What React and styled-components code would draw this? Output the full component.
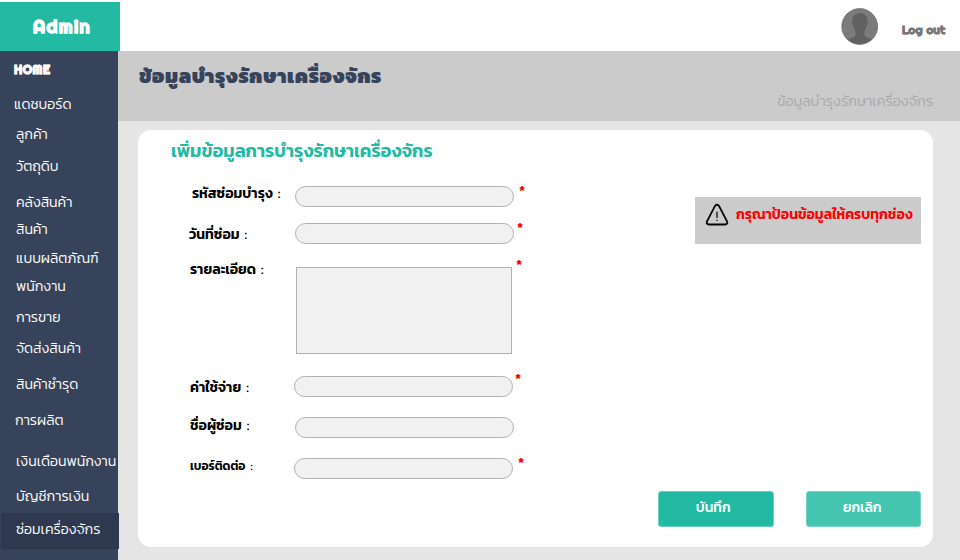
import React from "react";
import styled, { createGlobalStyle } from "styled-components";

const GlobalStyle = createGlobalStyle`
  *, *::before, *::after { box-sizing: border-box; }
  body { margin: 0; background: #fff; font-family: "Kanit", "Noto Sans Thai", "Noto Sans", sans-serif; }
  button { font: inherit; border: 0; padding: 0; }
`;

const display = `"Righteous", "Kanit", sans-serif`;

const Page = styled.div`
  width: 960px;
  height: 560px;
  display: grid;
  grid-template-columns: 118px 842px;
  grid-template-rows: 51px 509px;
  overflow: hidden;
  background: #fff;
`;

const Header = styled.header`
  grid-column: 1 / -1;
  display: flex;
  justify-content: space-between;
  padding-top: 2px;
`;

const Brand = styled.div`
  width: 120px;
  height: 49px;
  padding: 13px 0 0 33px;
  background: #22baa3;
  color: #fff;
  font: 700 18px/24px ${display};
  letter-spacing: 1.4px;
  -webkit-text-stroke: 0.6px;
  white-space: nowrap;
`;

const Account = styled.div`
  display: flex;
  padding: 6px 0 0;
  width: 119px;
`;

const LogOut = styled.a`
  margin: 13px 0 0 23px;
  color: #77777b;
  font: 700 11.5px/18px ${display};
  letter-spacing: 0.3px;
  -webkit-text-stroke: 0.5px;
  white-space: nowrap;
`;

const Sidebar = styled.nav`
  display: flex;
  flex-direction: column;
  background: #37435a;
  color: #fff;
  z-index: 1;
`;

const Home = styled.a`
  height: 43px;
  padding: 10px 0 0 14px;
  font: 700 12px/18px ${display};
  letter-spacing: 0.5px;
  -webkit-text-stroke: 0.7px;
`;

const NavItem = styled.a`
  flex: none;
  height: ${(p) => p.$height}px;
  padding-left: ${(p) => p.$inset || 16}px;
  font-size: 14.2px;
  font-weight: 300;
  line-height: 20px;
  white-space: nowrap;
`;

const ActiveItem = styled(NavItem)`
  width: 118px;
  margin: 0 0 0 1px;
  padding: 6px 0 0 15px;
  background: #2e3950;
`;

const Main = styled.main`
  display: flex;
  flex-direction: column;
  background: #e5e5e5;
`;

const TitleBar = styled.div`
  height: 70px;
  padding: 10px 27px 0 21px;
  display: flex;
  flex-direction: column;
  background: #cbcbcb;
`;

const PageTitle = styled.h1`
  margin: 0;
  color: #37435a;
  font-size: 20px;
  font-weight: 900;
  line-height: 30px;
  letter-spacing: 0.64px;
  white-space: nowrap;
`;

const Crumb = styled.span`
  align-self: flex-end;
  color: #a8a8a8;
  font-size: 14.4px;
  font-weight: 300;
  line-height: 20px;
`;

const Card = styled.section`
  width: 795px;
  height: 417px;
  margin: 9px 0 0 20px;
  border-radius: 13px;
  background: #fff;
  display: grid;
  grid-template-columns: 557px 226px;
  grid-template-rows: 50px 311px 36px;
`;

const CardTitle = styled.h2`
  grid-column: 1 / -1;
  margin: 0;
  padding: 7px 0 0 33px;
  color: #22baa3;
  font-size: 18.2px;
  font-weight: 600;
  line-height: 28px;
`;

const Form = styled.div`
  display: flex;
  flex-direction: column;
`;

const Row = styled.label`
  display: flex;
  align-items: flex-start;
  height: ${(p) => p.$height}px;
`;

const Label = styled.span`
  flex: none;
  display: flex;
  width: ${(p) => p.$width}px;
  padding: ${(p) => p.$top}px 0 0 ${(p) => p.$left}px;
  gap: 5px;
  color: #000;
  font-size: ${(p) => p.$size || 14.1}px;
  font-weight: 600;
  line-height: 20px;
  white-space: nowrap;
`;

const Colon = styled.span`
  font-weight: 500;
`;

const Input = styled.input`
  flex: none;
  width: 219px;
  height: 21px;
  margin: ${(p) => p.$top}px 0 0;
  padding: 0 10px;
  border: 1px solid #b1b1b1;
  border-radius: 11px;
  background: #f1f1f1;
`;

const TextArea = styled.textarea`
  flex: none;
  width: 216px;
  height: 87px;
  margin: 9px 0 0;
  border: 1px solid #b1b1b1;
  background: #f1f1f1;
  resize: none;
`;

const Required = styled.span`
  margin: ${(p) => p.$top}px 0 0 ${(p) => p.$left}px;
  color: #f00;
  font-size: 14px;
  font-weight: 600;
  line-height: 16px;
`;

const Alert = styled.div`
  width: 226px;
  height: 47px;
  margin-top: 17px;
  padding: 6px 0 0 10px;
  display: flex;
  gap: 7px;
  background: #cbcbcb;
  color: #f00;
  font-size: 14.1px;
  font-weight: 600;
  line-height: 22px;
  white-space: nowrap;
`;

const Actions = styled.div`
  grid-column: 1 / -1;
  display: flex;
  gap: 32px;
  padding-left: 520px;
`;

const Button = styled.button`
  width: 116px;
  height: 36px;
  padding: ${(p) => (p.$muted ? "0 2px 3px 0" : "0 5px 3px 0")};
  border: 1px solid ${(p) => (p.$muted ? "#74d4c3" : "#68cfbd")};
  border-radius: 3px;
  background: ${(p) => (p.$muted ? "#44c5b0" : "#22b9a2")};
  color: #fff;
  font-size: 14px;
  font-weight: 500;
  line-height: 20px;
`;

const Avatar = () => (
  <svg width="38" height="38" viewBox="0 0 38 38">
    <defs>
      <clipPath id="face"><circle cx="18.700" cy="18.500" r="17.400" /></clipPath>
    </defs>
    <circle cx="18.700" cy="18.500" r="17.900" fill="#7b7b7b" stroke="#6c6c6c" strokeWidth="0.800" />
    <path clipPath="url(#face)" fill="#616161" d="M19 5c-5 0-7.700 3.500-7.500 8-.8.300-.7 3 .8 4.200.4 2.500 1.400 4.300 2.200 5.500v4.500c-1.200 3-6.500 2.600-8.500 5.300V38h26v-5.500c-2-2.700-7.300-2.300-8.500-5.300v-4.500c.8-1.200 1.800-3 2.200-5.500 1.500-1.200 1.600-3.900.8-4.200.2-4.500-2.500-8-7.500-8z" />
  </svg>
);

const Warning = () => (
  <svg width="24" height="24" viewBox="0 0 24 24" fill="none" stroke="#000" strokeLinecap="round" strokeLinejoin="round">
    <path strokeWidth="1.800" d="M9.900 3.100 2 18.300c-.9 1.800 0 3.200 1.900 3.200h16.200c1.900 0 2.800-1.400 1.900-3.200L14.100 3.100c-1-1.800-3.200-1.800-4.200 0z" />
    <path strokeWidth="1.200" d="M12 9v5.500M12 17.200v.2" />
  </svg>
);

const nav = [
  ["แดชบอร์ด", 30, 14],
  ["ลูกค้า", 32],
  ["วัตถุดิบ", 36],
  ["คลังสินค้า", 27],
  ["สินค้า", 29],
  ["แบบผลิตภัณฑ์", 28],
  ["พนักงาน", 31],
  ["การขาย", 31],
  ["จัดส่งสินค้า", 36],
  ["สินค้าชำรุด", 36],
  ["การผลิต", 41, 15],
  ["เงินเดือนพนักงาน", 35],
  ["บัญชีการเงิน", 27],
];

const fields = [
  { name: "รหัสซ่อมบำรุง", height: 38, left: 54, width: 157, top: 3, input: 6, star: [3, 5] },
  { name: "วันที่ซ่อม", height: 40, left: 51, width: 157, top: 6, input: 5, star: [2, 3] },
  { name: "รายละเอียด", height: 113, left: 52, width: 158, top: 1, area: true, star: [-1, 4] },
  { name: "ค่าใช้จ่าย", height: 40, left: 52, width: 156, top: 6, input: 5, star: [0, 2] },
  { name: "ชื่อผู้ซ่อม", height: 41, left: 52, width: 157, top: 4, input: 6 },
  { name: "เบอร์ติดต่อ", height: 39, left: 52, width: 156, top: 4, input: 6, size: 12, star: [3, 5] },
];

export default function App() {
  return (
    <Page>
      <GlobalStyle />
      <Header>
        <Brand>Admin</Brand>
        <Account>
          <Avatar />
          <LogOut>Log out</LogOut>
        </Account>
      </Header>
      <Sidebar>
        <Home>HOME</Home>
        {nav.map(([name, height, inset]) => (
          <NavItem key={name} $height={height} $inset={inset}>{name}</NavItem>
        ))}
        <ActiveItem $height={36}>ซ่อมเครื่องจักร</ActiveItem>
      </Sidebar>
      <Main>
        <TitleBar>
          <PageTitle>ข้อมูลบำรุงรักษาเครื่องจักร</PageTitle>
          <Crumb>ข้อมูลบำรุงรักษาเครื่องจักร</Crumb>
        </TitleBar>
        <Card>
          <CardTitle>เพิ่มข้อมูลการบำรุงรักษาเครื่องจักร</CardTitle>
          <Form>
            {fields.map((f) => (
              <Row key={f.name} $height={f.height}>
                <Label $width={f.width} $left={f.left} $top={f.top} $size={f.size}>
                  <span>{f.name}</span>
                  <Colon>:</Colon>
                </Label>
                {f.area ? <TextArea /> : <Input $top={f.input} />}
                {f.star && <Required $top={f.star[0]} $left={f.star[1]}>*</Required>}
              </Row>
            ))}
          </Form>
          <Alert>
            <Warning />
            <span>กรุณาป้อนข้อมูลให้ครบทุกช่อง</span>
          </Alert>
          <Actions>
            <Button>บันทึก</Button>
            <Button $muted>ยกเลิก</Button>
          </Actions>
        </Card>
      </Main>
    </Page>
  );
}
